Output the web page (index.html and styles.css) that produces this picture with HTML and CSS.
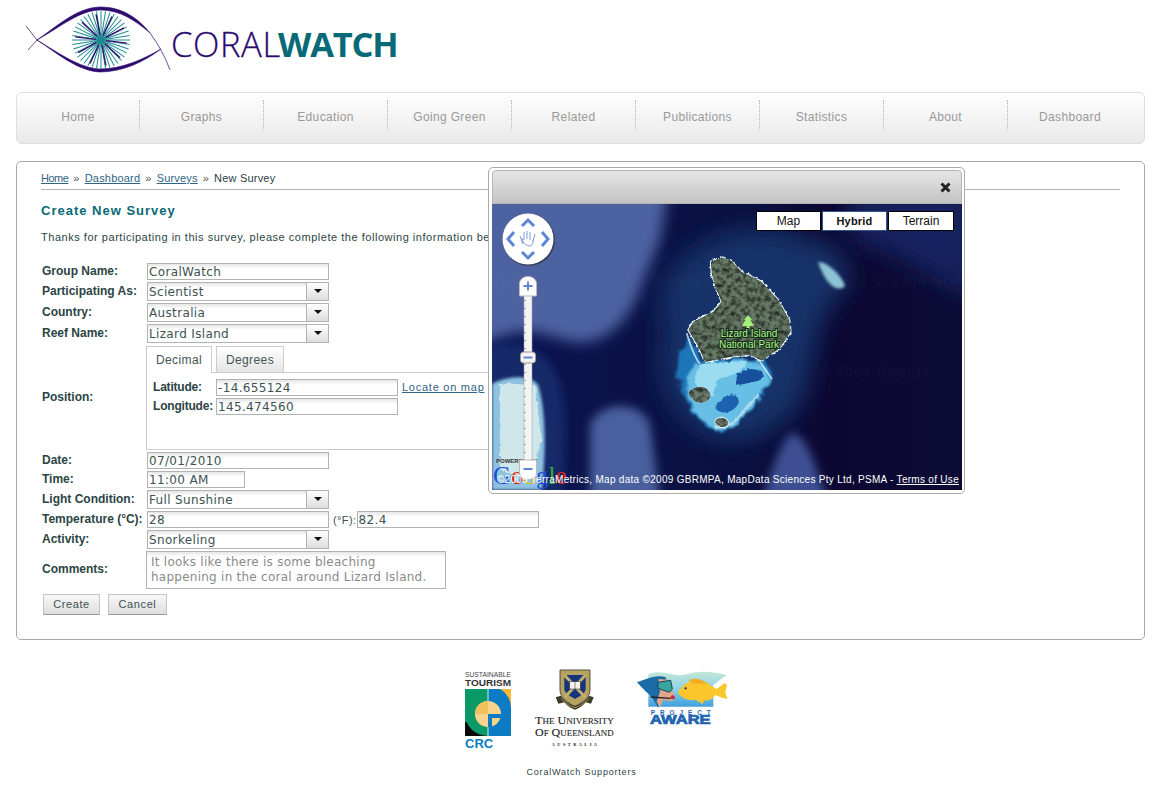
FILE: index.html
```html
<!DOCTYPE html>
<html lang="en">
<head>
<meta charset="utf-8">
<title>CoralWatch - New Survey</title>
<link rel="stylesheet" href="styles.css">
</head>
<body>
<header class="header">
  <svg class="logo" width="420" height="92" viewBox="0 0 420 92">
    <defs>
      <line id="sp" x1="101" y1="35" x2="101" y2="11" stroke="#1d8a92" stroke-width="1"/>
      <line id="pp" x1="101" y1="35" x2="101" y2="14" stroke="#33106e" stroke-width="1.4"/>
    </defs>
    <path d="M37 40 C60 24 78 7 101 7 C122 7 138 18 150 33 C136 21 120 10 101 10 C80 10 62 26 37 40Z" fill="#2c0a6e" stroke="#2c0a6e" stroke-width=".6"/>
    <path d="M37 40 C58 54 78 71 100 72 C122 72 144 62 161 49 C144 59 122 69 100 69 C80 68 60 54 37 40Z" fill="#2c0a6e" stroke="#2c0a6e" stroke-width=".6"/>
    <path d="M26 26 L37 40 L28 50 M150 33 C158 44 165 56 170 70" fill="none" stroke="#3a2a7e" stroke-width="0.8"/>
    <g>
      <use href="#sp"/><use href="#sp" transform="rotate(9 101 40)"/><use href="#sp" transform="rotate(18 101 40)"/><use href="#sp" transform="rotate(27 101 40)"/><use href="#sp" transform="rotate(36 101 40)"/><use href="#sp" transform="rotate(45 101 40)"/><use href="#sp" transform="rotate(54 101 40)"/><use href="#sp" transform="rotate(63 101 40)"/><use href="#sp" transform="rotate(72 101 40)"/><use href="#sp" transform="rotate(81 101 40)"/><use href="#sp" transform="rotate(90 101 40)"/><use href="#sp" transform="rotate(99 101 40)"/><use href="#sp" transform="rotate(108 101 40)"/><use href="#sp" transform="rotate(117 101 40)"/><use href="#sp" transform="rotate(126 101 40)"/><use href="#sp" transform="rotate(135 101 40)"/><use href="#sp" transform="rotate(144 101 40)"/><use href="#sp" transform="rotate(153 101 40)"/><use href="#sp" transform="rotate(162 101 40)"/><use href="#sp" transform="rotate(171 101 40)"/><use href="#sp" transform="rotate(180 101 40)"/><use href="#sp" transform="rotate(189 101 40)"/><use href="#sp" transform="rotate(198 101 40)"/><use href="#sp" transform="rotate(207 101 40)"/><use href="#sp" transform="rotate(216 101 40)"/><use href="#sp" transform="rotate(225 101 40)"/><use href="#sp" transform="rotate(234 101 40)"/><use href="#sp" transform="rotate(243 101 40)"/><use href="#sp" transform="rotate(252 101 40)"/><use href="#sp" transform="rotate(261 101 40)"/><use href="#sp" transform="rotate(270 101 40)"/><use href="#sp" transform="rotate(279 101 40)"/><use href="#sp" transform="rotate(288 101 40)"/><use href="#sp" transform="rotate(297 101 40)"/><use href="#sp" transform="rotate(306 101 40)"/><use href="#sp" transform="rotate(315 101 40)"/><use href="#sp" transform="rotate(324 101 40)"/><use href="#sp" transform="rotate(333 101 40)"/><use href="#sp" transform="rotate(342 101 40)"/><use href="#sp" transform="rotate(351 101 40)"/>
      <use href="#pp" transform="rotate(25 101 40)"/><use href="#pp" transform="rotate(62 101 40)"/><use href="#pp" transform="rotate(97 101 40)"/><use href="#pp" transform="rotate(133 101 40)"/><use href="#pp" transform="rotate(169 101 40)"/><use href="#pp" transform="rotate(205 101 40)"/><use href="#pp" transform="rotate(241 101 40)"/><use href="#pp" transform="rotate(277 101 40)"/><use href="#pp" transform="rotate(313 101 40)"/><use href="#pp" transform="rotate(349 101 40)"/>
      <circle cx="101" cy="40" r="5" fill="#1d8a92"/>
    </g>
    <text class="logo-coral" x="171" y="57">CORAL</text>
    <text class="logo-watch" x="278" y="57">WATCH</text>
  </svg>
</header>

<nav class="nav">
  <a class="nav-item">Home</a><a class="nav-item">Graphs</a><a class="nav-item">Education</a><a class="nav-item">Going Green</a><a class="nav-item">Related</a><a class="nav-item">Publications</a><a class="nav-item">Statistics</a><a class="nav-item">About</a><a class="nav-item nav-last">Dashboard</a>
</nav>

<main class="panel">
  <div class="crumbs">
    <a class="link crumb-home">Home</a><span class="sep">»</span><a class="link">Dashboard</a><span class="sep">»</span><a class="link">Surveys</a><span class="sep">»</span><span>New Survey</span>
  </div>
  <h1 class="title">Create New Survey</h1>
  <p class="intro">Thanks for participating in this survey, please complete the following information below.</p>
  <form class="form">
    <label class="lbl">Group Name:</label>
    <div class="field"><span class="input w182">CoralWatch</span></div>
    <label class="lbl">Participating As:</label>
    <div class="field"><span class="select"><span class="select-text">Scientist</span><span class="select-btn"></span></span></div>
    <label class="lbl">Country:</label>
    <div class="field"><span class="select"><span class="select-text">Australia</span><span class="select-btn"></span></span></div>
    <label class="lbl">Reef Name:</label>
    <div class="field"><span class="select"><span class="select-text">Lizard Island</span><span class="select-btn"></span></span></div>
    <label class="lbl">Position:</label>
    <div class="tabs">
      <div class="tabstrip"><span class="tab tab-on">Decimal</span><span class="tab">Degrees</span></div>
      <div class="tabpanel">
        <div class="coord"><label class="coord-lbl">Latitude:</label><span class="input w182">-14.655124</span><a class="link locate">Locate on map</a></div>
        <div class="coord"><label class="coord-lbl">Longitude:</label><span class="input w182">145.474560</span></div>
      </div>
    </div>
    <label class="lbl">Date:</label>
    <div class="field"><span class="input w182">07/01/2010</span></div>
    <label class="lbl">Time:</label>
    <div class="field"><span class="input w98">11:00 AM</span></div>
    <label class="lbl">Light Condition:</label>
    <div class="field"><span class="select"><span class="select-text">Full Sunshine</span><span class="select-btn"></span></span></div>
    <label class="lbl">Temperature (°C):</label>
    <div class="field"><span class="input w182">28</span><span class="unit">(°F):</span><span class="input w182">82.4</span></div>
    <label class="lbl">Activity:</label>
    <div class="field"><span class="select"><span class="select-text">Snorkeling</span><span class="select-btn"></span></span></div>
    <label class="lbl">Comments:</label>
    <div class="field"><span class="textarea">It looks like there is some bleaching<br>happening in the coral around Lizard Island.</span></div>
    <div class="buttons"><button class="btn" type="button">Create</button><button class="btn" type="button">Cancel</button></div>
  </form>
</main>

<footer class="footer">
  <div class="sponsors">
    <svg width="48" height="80" viewBox="0 0 48 80">
      <defs>
        <clipPath id="crc-sq"><rect x="1" y="19" width="46" height="47"/></clipPath>
      </defs>
      <text class="crc-a" x="1" y="7" textLength="46" lengthAdjust="spacingAndGlyphs">SUSTAINABLE</text>
      <text class="crc-b" x="1" y="16" textLength="46" lengthAdjust="spacingAndGlyphs">TOURISM</text>
      <g clip-path="url(#crc-sq)">
        <rect x="1" y="19" width="23" height="47" fill="#0a9a68"/>
        <rect x="24" y="19" width="23" height="47" fill="#0b7cc4"/>
        <rect x="1" y="52" width="23" height="14" fill="#0a0a0a"/>
        <path d="M1 44 A23 22 0 0 0 24 66 L24 66 L24 44Z" fill="#0a9a68"/>
        <path d="M36 19 H47 V38 A23 23 0 0 0 36 19Z" fill="#f9b934"/>
        <circle cx="24" cy="44" r="13" fill="#f7d48d"/>
        <path d="M24 31 A13 13 0 0 0 11 44 H24Z" fill="#f3c15b"/>
        <path d="M24 44 V57 H28 V48 H37 V44Z" fill="#0b7cc4"/>
        <path d="M24 19 V31 M24 57 V66" stroke="#fff" stroke-width=".8"/>
      </g>
      <text class="crc-c" x="1" y="78">CRC</text>
    </svg>
    <svg width="81" height="80" viewBox="0 0 81 80">
      <g transform="translate(-9 -5) scale(.33333)">
        <path d="M105 15 H195 V75 C195 100 170 112 150 125 C130 112 105 100 105 75Z" fill="#b5a25f" stroke="#3a3a30" stroke-width="2.500"/>
        <path d="M118 30 H182 V72 C182 85 162 95 150 102 C138 95 118 85 118 72Z" fill="#14347c"/>
        <path d="M118 30 L182 98 M182 30 L118 98" stroke="#c4b06a" stroke-width="9"/>
        <rect x="134" y="50" width="32" height="22" fill="#f4f2e8" stroke="#222" stroke-width="1.500"/>
        <path d="M150 50 V72" stroke="#222" stroke-width="1.500"/>
        <path d="M92 97 L108 92 C118 108 134 118 150 122 C166 118 182 108 192 92 L206 97 L198 116 L182 112 C172 124 162 130 150 134 C138 130 128 124 118 112 L100 116Z" fill="#3c3c26"/>
        <path d="M108 100 C120 116 136 124 150 128 C164 124 180 116 192 100" fill="none" stroke="#b5a25f" stroke-width="2.500"/>
        <text class="uq-a" x="30" y="176" textLength="236" lengthAdjust="spacingAndGlyphs">T<tspan class="uq-s">HE</tspan> U<tspan class="uq-s">NIVERSITY</tspan></text>
        <text class="uq-a" x="30" y="213" textLength="236" lengthAdjust="spacingAndGlyphs">O<tspan class="uq-s">F</tspan> Q<tspan class="uq-s">UEENSLAND</tspan></text>
        <text class="uq-b" x="80" y="243" textLength="136">AUSTRALIA</text>
      </g>
    </svg>
    <svg width="90" height="62" viewBox="0 0 90 62">
      <defs><linearGradient id="aw" x1="0" y1="0" x2="0" y2="1"><stop offset="0" stop-color="#c3e8d6"/><stop offset=".5" stop-color="#8fd0e6"/><stop offset="1" stop-color="#3fa0dc"/></linearGradient></defs>
      <g transform="translate(-7 -5) scale(.33333)">
        <path d="M55 28 C100 10 130 40 170 28 C210 15 250 20 290 30 L250 60 V125 H55Z" fill="url(#aw)"/>
        <path d="M21 52 C50 40 80 28 106 36 L112 50 L84 128 C72 105 62 90 48 80 C40 72 30 62 21 52Z" fill="#1c6aa6"/>
        <path d="M85 42 L116 44 L132 90 L128 108 L100 104 L90 128 L80 110 L90 80Z" fill="#e2a588"/>
        <path d="M84 52 L122 46 L127 72 L118 82 L84 70Z" fill="#3aa59c" stroke="#10445f" stroke-width="3"/>
        <path d="M62 96 L122 100" stroke="#222" stroke-width="4"/>
        <circle cx="128" cy="97" r="6" fill="#d1233c"/>
        <path d="M144 84 C156 54 196 34 236 56 C246 64 254 68 260 72 L284 54 L291 60 L286 80 L292 102 L276 98 L256 90 C244 106 232 108 222 106 L218 118 L196 104 C174 108 156 100 144 84Z" fill="#fbc62c"/>
        <path d="M176 46 C190 36 214 42 234 56 L188 56Z" fill="#f3ad1f"/>
        <circle cx="167" cy="70" r="3.500" fill="#2b2b66"/>
        <text class="aw-a" x="62" y="150" textLength="180">PROJECT</text>
        <text class="aw-b" x="60" y="177" textLength="182" lengthAdjust="spacingAndGlyphs">AWARE</text>
      </g>
    </svg>
  </div>
  <p class="caption">CoralWatch Supporters</p>
</footer>

<aside class="dialog">
  <div class="dialog-bar">
    <svg class="close" width="11" height="11" viewBox="0 0 11 11"><path d="M1.500 1.500 L9.500 9.500 M9.500 1.500 L1.500 9.500" stroke="#222" stroke-width="3"/></svg>
  </div>
  <div class="map">
    <svg class="map-img" width="470" height="286" viewBox="492 204 470 286">
      <defs>
        <filter id="b10" x="-30%" y="-30%" width="160%" height="160%"><feGaussianBlur stdDeviation="7"/></filter>
        <filter id="b14" x="-40%" y="-40%" width="180%" height="180%"><feGaussianBlur stdDeviation="12"/></filter>
        <filter id="b5" x="-30%" y="-30%" width="160%" height="160%"><feGaussianBlur stdDeviation="5"/></filter>
        <filter id="b1" x="-20%" y="-20%" width="140%" height="140%"><feGaussianBlur stdDeviation="1.500"/></filter>
        <filter id="org" x="-25%" y="-25%" width="150%" height="150%" color-interpolation-filters="sRGB">
          <feTurbulence type="fractalNoise" baseFrequency="0.035" numOctaves="3" seed="4" result="n"/>
          <feDisplacementMap in="SourceGraphic" in2="n" scale="34" xChannelSelector="R" yChannelSelector="G" result="d"/>
          <feGaussianBlur in="d" stdDeviation="2.500"/>
        </filter>
        <filter id="orgs" x="-25%" y="-25%" width="150%" height="150%" color-interpolation-filters="sRGB">
          <feTurbulence type="fractalNoise" baseFrequency="0.08" numOctaves="3" seed="9" result="n"/>
          <feDisplacementMap in="SourceGraphic" in2="n" scale="12" xChannelSelector="R" yChannelSelector="G" result="d"/>
          <feGaussianBlur in="d" stdDeviation="1"/>
        </filter>
        <filter id="rock" x="-5%" y="-5%" width="110%" height="110%" color-interpolation-filters="sRGB">
          <feGaussianBlur in="SourceGraphic" stdDeviation="1" result="s"/>
          <feTurbulence type="fractalNoise" baseFrequency="0.07" numOctaves="3" seed="7" result="n"/>
          <feColorMatrix in="n" type="matrix" values="1.500 0 0 0 .05  1.500 0 0 0 .05  1.500 0 0 0 .05  0 0 0 0 1" result="g"/>
          <feComposite in="s" in2="g" operator="arithmetic" k1="1.200" k2="0"/>
          <feComposite in2="s" operator="in"/>
        </filter>
        <linearGradient id="sea" x1="0" y1="0" x2="1" y2="0"><stop offset="0" stop-color="#0b1552"/><stop offset="0.55" stop-color="#0a1040"/><stop offset="0.72" stop-color="#0c0732"/><stop offset="1" stop-color="#0c0c36"/></linearGradient>
      </defs>
      <rect x="492" y="204" width="470" height="286" fill="url(#sea)"/>
      <path d="M850 190 H975 V300 C940 280 890 250 850 240Z" fill="#12245f" filter="url(#b14)"/>
      <path d="M470 180 H670 L660 240 L636 300 C622 328 600 344 578 342 C556 340 545 330 522 332 C505 333 495 340 470 348Z" fill="#4d62a1" filter="url(#b10)"/>
      <path d="M590 500 L590 425 C600 400 642 400 650 425 L660 500Z" fill="#4a5f9e" filter="url(#b5)"/>
      <path d="M762 500 C772 470 784 430 795 433 C810 442 816 470 828 500Z" fill="#3d4f92" filter="url(#b5)"/>
      <path d="M470 352 C510 335 548 345 560 385 C568 420 564 460 562 500 L470 500Z" fill="#14296a" filter="url(#b5)"/>
      <path d="M492 384 C505 376 530 374 538 385 C546 410 546 450 542 490 H492Z" fill="#8fc2e0" filter="url(#b1)"/>
      <g transform="translate(480 360) scale(.33333)">
        <path d="M60 70 L165 75 L185 240 L150 360 L60 330Z" fill="#cfe6ea" filter="url(#orgs)"/>
      </g>
      <path d="M660 290 C690 225 775 215 805 240 C830 232 852 262 850 285 C815 312 815 360 805 395 C785 432 745 448 712 438 C675 425 655 385 664 340Z" fill="#123268" filter="url(#b14)"/>
      <g transform="translate(660 240) scale(.33333)">
        <path d="M55 345 C50 380 45 400 62 435 C75 480 100 530 150 565 C190 585 240 560 270 505 C300 470 325 440 340 410 L320 360 L130 360 L85 290Z" fill="#1d76b8" filter="url(#org)"/>
        <path d="M110 372 L270 360 L320 395 L335 420 L295 470 L255 530 L225 560 L165 572 L115 530 L85 470 L80 410Z" fill="#68bfe6" filter="url(#org)"/>
        <path d="M120 372 L265 362 L240 395 L170 420 L160 470 L110 450 L105 410Z" fill="#9bdcf0" filter="url(#orgs)"/>
        <path d="M235 400 C260 380 300 385 312 405 C300 430 270 425 240 435 C225 435 225 415 235 400Z" fill="#17509f" filter="url(#orgs)"/>
        <path d="M190 475 C210 455 240 460 235 490 C225 515 190 525 170 510 C165 495 175 485 190 475Z" fill="#1c62ae" filter="url(#orgs)"/>
        <path d="M165 560 C200 570 230 545 262 500 L295 465" fill="none" stroke="#c8e8f0" stroke-width="8" opacity=".7" filter="url(#orgs)"/>
        <path d="M290 350 L336 418 M120 372 C100 350 90 310 80 280" fill="none" stroke="#d4ecf2" stroke-width="5" opacity=".85" filter="url(#b1)"/>
        <path d="M152 65 L185 52 L215 62 L245 95 L305 125 L355 180 L388 240 L392 275 L360 325 L305 362 L270 345 L215 350 L135 366 L115 320 L85 270 L100 245 L160 215 L185 185 L165 140 L155 100Z" fill="#dfeeee" stroke="#e4f2f2" stroke-width="6" filter="url(#orgs)"/>
        <path d="M152 65 L185 52 L215 62 L245 95 L305 125 L355 180 L388 240 L392 275 L360 325 L305 362 L270 345 L215 350 L135 366 L115 320 L85 270 L100 245 L160 215 L185 185 L165 140 L155 100Z" fill="#566655" filter="url(#rock)"/>
        <path d="M85 460 C95 435 145 430 152 465 C150 490 105 505 85 460Z" fill="#dcecef" filter="url(#b1)"/>
        <path d="M85 460 C95 435 145 430 152 465 C150 490 105 505 85 460Z" fill="#5e6a5e" filter="url(#rock)"/>
        <path d="M162 545 C170 525 200 525 208 548 C205 568 175 572 162 545Z" fill="#dcecef" filter="url(#b1)"/>
        <path d="M164 545 C172 529 198 529 206 548 C203 564 175 568 164 545Z" fill="#5e6a5e" filter="url(#rock)"/>
      </g>
      <path d="M818 262 C828 262 842 276 845 286 C838 293 826 286 818 262Z" fill="#8ec3d6" filter="url(#b1)"/>
      <path d="M748 315 L752 320 L750.500 320 L754 326 L749.500 326 L749.500 328 L746.500 328 L746.500 326 L742 326 L745.500 320 L744 320Z" fill="#a6f07a"/>
      <text class="mark" x="492" y="289">2009</text>
      <text class="mark" x="650" y="286">© 2009 Google</text>
      <text class="mark" x="820" y="377">© 2009 Google</text>
      <text class="mark" x="875" y="286">© 2009 Goo</text>
      <text class="park" x="749" y="337">Lizard Island</text>
      <text class="park" x="749" y="348">National Park</text>
      <text class="powered" x="496" y="463">POWERED BY</text>
      <text class="goog" x="493" y="484"><tspan fill="#1a4fd6">G</tspan><tspan fill="#e0261c">o</tspan><tspan fill="#e8c31c">o</tspan><tspan fill="#1a4fd6">g</tspan><tspan fill="#2fae3a">l</tspan><tspan fill="#e0261c">e</tspan></text>
      <circle cx="529" cy="240" r="26" fill="#222" opacity=".5"/>
      <circle cx="528" cy="239" r="25.500" fill="#fff"/>
      <g fill="none" stroke="#5e86d6" stroke-width="3">
        <path d="M522 226 L528 220 L534 226"/>
        <path d="M522 252 L528 258 L534 252"/>
        <path d="M514 232 L508 239 L514 246"/>
        <path d="M542 232 L548 239 L542 246"/>
      </g>
      <path d="M523 244 L520 236 M524 240 L524 232 M527 239 L527 231 M530 240 L530 232 M533 241 L535 234 M522 238 C523 244 527 246 530 246 C533 245 533 243 533 240" fill="none" stroke="#7a98d8" stroke-width="1"/>
      <rect x="524" y="295" width="8" height="170" fill="#f4f4f4" stroke="#9a9a9a" stroke-width=".5"/>
      <path d="M525 300 V460" stroke="#999" stroke-width="2" stroke-dasharray="1 7"/>
      <path d="M519.500 296 V284 C519.500 274 536.500 274 536.500 284 V296Z" fill="#fff" stroke="#bbb"/>
      <path d="M523.500 286 H532.500 M528 281.500 V290.500" stroke="#5e86d6" stroke-width="2"/>
      <rect x="520.500" y="352" width="15" height="11" rx="3" fill="#f4f4f4" stroke="#999"/>
      <path d="M523.500 357.500 H532.500" stroke="#5e86d6" stroke-width="2"/>
      <path d="M519.500 460 V472 C519.500 482 536.500 482 536.500 472 V460Z" fill="#fff" stroke="#bbb"/>
      <path d="M523.500 469 H532.500" stroke="#5e86d6" stroke-width="2"/>
    </svg>
    <div class="maptypes"><span class="maptype">Map</span><span class="maptype maptype-on">Hybrid</span><span class="maptype">Terrain</span></div>
    <div class="attrib">©2009 TerraMetrics, Map data ©2009 GBRMPA, MapData Sciences Pty Ltd, PSMA - <u>Terms of Use</u></div>
  </div>
</aside>
</body>
</html>
```
FILE: styles.css
```css
* { box-sizing: border-box; }
html, body { margin: 0; padding: 0; }
body {
  position: relative;
  min-height: 788px;
  background: #fff;
  color: #2b4444;
  font: 11px/14px "Liberation Sans", Arial, sans-serif;
  overflow: hidden;
}
.header { height: 92px; }
.logo { display: block; }
.logo-coral { font: 300 34.5px "Open Sans", sans-serif; fill: #2c0a6e; stroke: #2c0a6e; stroke-width: .3px; letter-spacing: .6px; }
.logo-watch { font: 700 34.5px "Open Sans", sans-serif; fill: #076a76; letter-spacing: -1.2px; }

.nav {
  display: flex;
  margin: 0 16px;
  height: 52px;
  border: 1px solid #dedede;
  border-radius: 6px;
  background: linear-gradient(#fff, #e9e9e9);
  margin-bottom: 17px;
  padding: 7px 0 13px;
}
.nav-item {
  width: 124px;
  border-right: 1px dotted #b5b5b5;
  color: #999;
  font-size: 12px;
  letter-spacing: .35px;
  line-height: 34px;
  text-align: center;
  flex: none;
}
.nav-item:first-child { width: 123px; }
.nav-last { border-right: 0; }

.panel {
  margin: 0 16px;
  height: 479px;
  border: 1px solid #a8a8a8;
  border-radius: 5px;
  padding: 0 24px;
}
.crumbs {
  height: 28px;
  border-bottom: 1px solid #b5b5b5;
  line-height: 32px;
  font-size: 11px;
  letter-spacing: .2px;
  color: #2b4444;
  white-space: nowrap;
}
.link { color: #2f6484; text-decoration: underline; }
.crumb-home { letter-spacing: -.5px; }
.sep { margin: 0 5px; color: #555; }
.title {
  margin: 14px 0 0;
  font-size: 13px;
  line-height: 14px;
  font-weight: bold;
  color: #076a76;
  letter-spacing: 1px;
}
.intro {
  margin: 12px 0 0;
  white-space: nowrap;
  font-size: 11px;
  letter-spacing: .53px;
  color: #2b4444;
}
.form {
  display: grid;
  grid-template-columns: 106px 1fr;
  row-gap: 2px;
  margin-top: 19px;
}
.lbl {
  display: flex;
  align-items: center;
  padding: 0 0 2px 1px;
  font-weight: bold;
  font-size: 12px;
  white-space: nowrap;
  color: #2b4444;
}
.field { display: flex; align-items: center; }
.input {
  display: block;
  height: 17px;
  border: 1px solid #b2b2b2;
  background: linear-gradient(#e6e6e6, #fff 5px);
  padding: 0 1px;
  font: 12px/16px "DejaVu Sans", sans-serif;
  letter-spacing: .35px;
  color: #3d5252;
  flex: none;
  white-space: nowrap;
  overflow: hidden;
}
.w182 { width: 182px; }
.w98 { width: 98px; }
.select {
  display: flex;
  width: 182px;
  height: 19px;
  border: 1px solid #b2b2b2;
  background: linear-gradient(#e6e6e6, #fff 5px);
}
.select-text {
  flex: 1;
  padding: 0 1px;
  font: 12px/18px "DejaVu Sans", sans-serif;
  letter-spacing: .35px;
  color: #3d5252;
}
.select-btn {
  position: relative;
  width: 22px;
  border-left: 1px solid #b2b2b2;
  background: linear-gradient(#fff, #ddd);
}
.select-btn::after {
  content: "";
  position: absolute;
  left: 7px;
  top: 6px;
  border: 4px solid transparent;
  border-top: 4px solid #111;
  border-bottom: 0;
}
.unit {
  margin: 0 0 0 4px;
  font-size: 11px;
  letter-spacing: .4px;
  color: #3d5252;
}
.tabs { height: 104px; margin: 1px 0 0 -1px; display: flex; flex-direction: column; }
.tabstrip { display: flex; gap: 4px; height: 27px; position: relative; z-index: 1; }
.tab {
  width: 68px;
  height: 26px;
  border: 1px solid #ccc;
  border-bottom: 0;
  background: linear-gradient(#fff, #e4e4e4);
  font-size: 12px;
  line-height: 26px;
  letter-spacing: .4px;
  text-align: center;
  color: #445555;
}
.tab-on { width: 66px; height: 27px; background: #fff; }
.tabpanel {
  width: 500px;
  margin-top: -1px;
  flex: 1;
  border: 1px solid #ccc;
  padding: 6px 0 0 6px;
}
.coord { display: flex; align-items: center; margin-bottom: 2px; }
.coord-lbl { width: 63px; font-weight: bold; font-size: 12px; letter-spacing: -.2px; color: #2b4444; flex: none; padding-bottom: 1px; }
.locate { margin: 0 0 2px 4px; font-size: 11px; letter-spacing: .75px; }
.textarea {
  display: block;
  width: 300px;
  height: 38px;
  margin-left: -1px;
  border: 1px solid #b2b2b2;
  background: linear-gradient(#e6e6e6, #fff 5px);
  padding: 3px 4px;
  font: 12px/15px "DejaVu Sans", sans-serif;
  letter-spacing: .25px;
  color: #8a8a8a;
  white-space: nowrap;
}
.buttons { grid-column: 1 / 3; display: flex; gap: 8px; margin: 3px 0 0 2px; }
.btn {
  height: 21px;
  padding: 0 0 2px;
  width: 57px;
  border: 1px solid #c4c4c4;
  border-bottom-color: #999;
  background: linear-gradient(#f8f8f8, #dedede);
  font: 11px "Liberation Sans", Arial, sans-serif;
  letter-spacing: .6px;
  color: #3d5252;
}
.btn + .btn { width: 59px; }

.footer { margin-top: 30px; }
.sponsors { display: flex; justify-content: center; gap: 22px; height: 80px; padding-left: 29px; }
.sponsors svg { display: block; flex: none; overflow: visible; }
.caption {
  margin: 16px 0 0;
  padding-left: 2px;
  text-align: center;
  font-size: 9px;
  line-height: 12px;
  letter-spacing: .8px;
  color: #2b4444;
}
.crc-a { font: 8px "Liberation Sans", sans-serif; fill: #444; }
.crc-b { font: bold 8.500px "Liberation Sans", sans-serif; fill: #333; }
.crc-c { font: bold 13px "Liberation Sans", sans-serif; fill: #0b7cc4; }
.uq-a { font: 31px "Liberation Serif", serif; fill: #222; stroke: #222; stroke-width: .3px; }
.uq-s { font-size: 23px; }
.uq-b { font: bold 13px "Liberation Serif", serif; fill: #222; }
.aw-a { font: bold 19px "Liberation Sans", sans-serif; fill: #1f64b0; }
.aw-b { font: 900 36px "Liberation Sans", sans-serif; fill: #1f64b0; stroke: #1f64b0; stroke-width: 2px; }

.dialog {
  position: absolute;
  left: 488px;
  top: 167px;
  width: 477px;
  height: 327px;
  border: 1px solid #aaa;
  border-radius: 5px;
  background: #fff;
  padding: 2px 2px 0 3px;
}
.dialog-bar {
  position: relative;
  height: 34px;
  border: 1px solid #b5b5b5;
  border-radius: 4px 4px 0 0;
  background: linear-gradient(#e6e6e6, #c3c3c3);
}
.close { position: absolute; right: 10px; top: 11px; }
.map { position: relative; width: 470px; height: 286px; overflow: hidden; }
.map-img { display: block; }
.maptypes { position: absolute; left: 264px; top: 7px; display: flex; gap: 1px; }
.maptype {
  width: 65px;
  height: 20px;
  border: 1px solid #000;
  background: #fff;
  color: #111;
  font-size: 12px;
  line-height: 18px;
  text-align: center;
}
.maptype-on { font-size: 11px; font-weight: bold; letter-spacing: .2px; border-color: #345684; }
.maptypes .maptype:last-child { width: 66px; }
.attrib {
  position: absolute;
  right: 3px;
  bottom: 4px;
  color: #fff;
  font-size: 10px;
  line-height: 12px;
  white-space: nowrap;
  letter-spacing: .29px;
}
.mark { font: bold 14px "Liberation Sans", sans-serif; fill: #fff; opacity: .02; letter-spacing: 1px; }
.park { font: 10px "Liberation Sans", sans-serif; fill: #b8f59a; stroke: #0c2a10; stroke-width: 2px; paint-order: stroke; text-anchor: middle; }
.powered { font: bold 6px "Liberation Sans", sans-serif; fill: #333; }
.goog { font: 25px "Liberation Serif", serif; }
```
